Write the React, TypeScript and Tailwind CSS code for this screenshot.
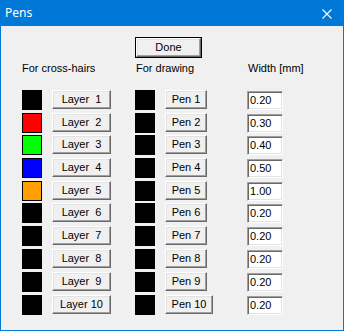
import type { ReactNode } from "react";

type Row = { layer: string; pen: string; color: string; width: string; h: string };

const rows: Row[] = [
  { layer: "Layer  1", pen: "Pen 1", color: "", width: "0.20", h: "h-[23px]" },
  { layer: "Layer  2", pen: "Pen 2", color: "bg-[#ff0000]", width: "0.30", h: "h-[22px]" },
  { layer: "Layer  3", pen: "Pen 3", color: "bg-[#00ff00]", width: "0.40", h: "h-[23px]" },
  { layer: "Layer  4", pen: "Pen 4", color: "bg-[#0000ff]", width: "0.50", h: "h-[23px]" },
  { layer: "Layer  5", pen: "Pen 5", color: "bg-[#ffa000]", width: "1.00", h: "h-[22px]" },
  { layer: "Layer  6", pen: "Pen 6", color: "", width: "0.20", h: "h-[23px]" },
  { layer: "Layer  7", pen: "Pen 7", color: "", width: "0.20", h: "h-[23px]" },
  { layer: "Layer  8", pen: "Pen 8", color: "", width: "0.20", h: "h-[23px]" },
  { layer: "Layer  9", pen: "Pen 9", color: "", width: "0.20", h: "h-[23px]" },
  { layer: "Layer 10", pen: "Pen 10", color: "", width: "0.20", h: "h-[23px]" },
];

// classic raised 3D push button
function Btn({ className, children }: { className: string; children: ReactNode }) {
  return (
    <button
      className={`flex h-[19px] items-center justify-center whitespace-pre border border-t-white border-l-white border-r-[#696969] border-b-[#696969] bg-[#f0f0f0] pb-px text-[11px] leading-none text-black shadow-[inset_-1px_-1px_#a0a0a0,inset_1px_1px_#e3e3e3] ${className}`}
    >
      {children}
    </button>
  );
}

function Swatch({ color }: { color: string }) {
  return <div className={`h-[20px] w-[20px] ${color ? `border border-black ${color}` : "bg-black"}`} />;
}

export default function App() {
  return (
    <div
      className="flex h-[331px] w-[344px] flex-col bg-[#0078d7] px-px pb-px"
      style={{ fontFamily: '"Liberation Sans", Arial, sans-serif' }}
    >
      <div className="flex h-[26px] shrink-0 items-center justify-between pl-[4px] pr-[11px] text-white">
        <span className="text-[12px] leading-none" style={{ fontFamily: '"Noto Sans", "DejaVu Sans", sans-serif' }}>
          Pens
        </span>
        <svg width="10" height="10" viewBox="0 0 10 10" className="mt-px">
          <path d="M0.5 0.5L9.5 9.5M9.5 0.5L0.5 9.5" stroke="white" strokeWidth="1.1" fill="none" />
        </svg>
      </div>

      <div className="flex flex-1 flex-col bg-[#f0f0f0] pl-[21px]">
        <div className="mt-[11px] pl-[113px]">
          <div className="w-[67px] border border-black">
            <Btn className="w-full h-[17px]">Done</Btn>
          </div>
        </div>

        <div className="mt-[4px] grid h-[28px] grid-cols-[113px_112px_1fr] text-[11px] leading-[13px] text-black">
          <span>For cross-hairs</span>
          <span className="pl-px">For drawing</span>
          <span className="pl-px">Width [mm]</span>
        </div>

        <div className="flex flex-col">
          {rows.map((r) => (
            <div key={r.layer} className={`grid grid-cols-[113px_112px_1fr] items-start ${r.h}`}>
              <div className="flex gap-[10px]">
                <Swatch color={r.color} />
                <Btn className="w-[59px]">{r.layer}</Btn>
              </div>
              <div className="flex gap-[10px]">
                <Swatch color="" />
                <Btn className={r.pen === "Pen 10" ? "w-[48px]" : "w-[42px]"}>{r.pen}</Btn>
              </div>
              <div className="mt-px flex h-[19px] w-[36px] items-center border border-t-[#a0a0a0] border-l-[#a0a0a0] border-r-white border-b-white bg-white pl-[2px] text-[11px] leading-none text-black shadow-[inset_1px_1px_#696969,inset_-1px_-1px_#e3e3e3]">
                {r.width}
              </div>
            </div>
          ))}
        </div>
      </div>
    </div>
  );
}
